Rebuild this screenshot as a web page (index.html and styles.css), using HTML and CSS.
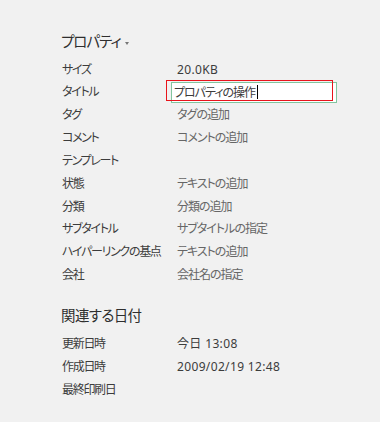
FILE: index.html
```html
<!DOCTYPE html>
<html lang="ja">
<head>
    <meta charset="UTF-8">
    <meta name="viewport" content="width=device-width, initial-scale=1.0">
    <title>プロパティ</title>
    <link rel="stylesheet" href="styles.css">
</head>
<body>

<div class="panel">
    <h2 class="heading">プロパティ<span class="caret"></span></h2>
    <div class="props">
        <div class="label">サイズ</div>
        <div class="value num">20.0KB</div>

        <div class="label">タイトル</div>
        <div class="value">
            <span class="edit">プロパティの操作<span class="cursor"></span></span>
            <span class="mark"></span>
        </div>

        <div class="label">タグ</div>
        <div class="value">タグの追加</div>

        <div class="label">コメント</div>
        <div class="value">コメントの追加</div>

        <div class="label">テンプレート</div>
        <div class="value"></div>

        <div class="label">状態</div>
        <div class="value">テキストの追加</div>

        <div class="label">分類</div>
        <div class="value">分類の追加</div>

        <div class="label">サブタイトル</div>
        <div class="value">サブタイトルの指定</div>

        <div class="label">ハイパーリンクの基点</div>
        <div class="value">テキストの追加</div>

        <div class="label">会社</div>
        <div class="value">会社名の指定</div>
    </div>

    <h2 class="heading second">関連する日付</h2>
    <div class="props">
        <div class="label">更新日時</div>
        <div class="value num">今日 13:08</div>

        <div class="label">作成日時</div>
        <div class="value num">2009/02/19 12:48</div>

        <div class="label">最終印刷日</div>
        <div class="value"></div>
    </div>
</div>

</body>
</html>
```

FILE: styles.css
```css
body {
    margin: 0;
    background-color: #f1f1f1;
    font-family: "Noto Sans", "Noto Sans CJK JP", sans-serif;
    font-feature-settings: "palt";
    color: #3c3c3c;
}

.panel {
    padding: 30px 0 0 61px;
}

.heading {
    margin: 0 0 6.5px 0;
    font-size: 14.5px;
    font-weight: normal;
    line-height: 22px;
    letter-spacing: -1px;
    color: #2e2e2e;
}

.heading.second {
    margin-top: 17.5px;
    margin-bottom: 7px;
    letter-spacing: -0.6px;
}

.caret {
    display: inline-block;
    margin-left: 4px;
    vertical-align: middle;
    border-left: 2.5px solid transparent;
    border-right: 2.5px solid transparent;
    border-top: 3px solid #777;
}

.props {
    display: grid;
    grid-template-columns: 116px 1fr;
    grid-auto-rows: 22.85px;
    font-size: 12px;
    line-height: 22.85px;
}

.label {
    padding-left: 1px;
    letter-spacing: -1.3px;
    color: #3c3c3c;
}

.value {
    position: relative;
    letter-spacing: -1px;
    color: #666;
}

.value.num {
    letter-spacing: 0.35px;
    color: #3c3c3c;
}

.edit {
    display: block;
    position: absolute;
    left: -6px;
    top: 1px;
    width: 166px;
    height: 21px;
    padding-left: 2px;
    box-sizing: border-box;
    line-height: 19px;
    background-color: #fff;
    border: 1px solid #82c59e;
    color: #3c3c3c;
}

.cursor {
    display: inline-block;
    width: 1px;
    height: 14px;
    margin-left: 2px;
    vertical-align: -2px;
    background-color: #000;
}

.mark {
    position: absolute;
    left: -11px;
    top: -1px;
    width: 167px;
    height: 21px;
    box-sizing: border-box;
    border: 1px solid #e8141b;
}
```
